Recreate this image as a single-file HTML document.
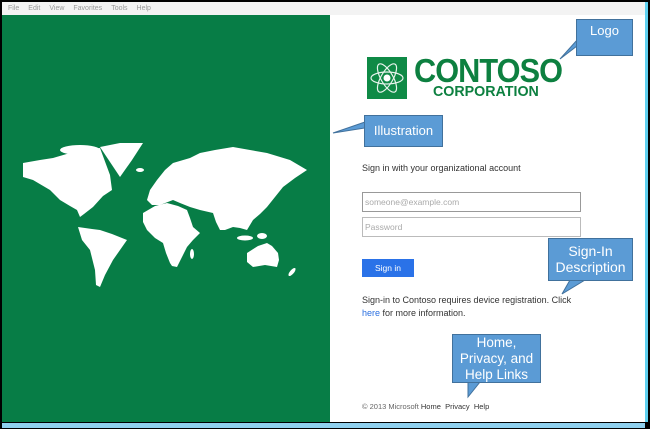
<!DOCTYPE html>
<html><head><style>
body{margin:0;width:650px;height:429px;background:#000;position:relative;overflow:hidden;font-family:"Liberation Sans",sans-serif}
.a{position:absolute}
.menu{left:2px;top:2px;width:643px;height:13px;background:#f3f3f3;font-size:7px;color:#999;line-height:13px}
.menu span{margin-left:6px;margin-right:3px}
.green{left:2px;top:15px;width:328px;height:407px;background:#077d46}
.white{left:330px;top:15px;width:315px;height:407px;background:#fff}
.cy{left:645px;top:2px;width:3px;height:420px;background:#5fd0ef}
.task{left:2px;top:423px;width:643px;height:5px;background:#8fd0ee}
.co{background:#5b9bd5;border:1px solid #41719c;color:#fff;font-family:"Liberation Sans",sans-serif;text-align:center;font-size:13px;line-height:16px;box-sizing:border-box}
.t{font-size:9px;color:#333}
input{position:absolute;border:1px solid #bbb;font-size:8.5px;color:#aaa;padding:0 2px;box-sizing:border-box;font-family:"Liberation Sans",sans-serif}
</style></head><body>
<div class="a menu"><span>File</span><span>Edit</span><span>View</span><span>Favorites</span><span>Tools</span><span>Help</span></div>
<div class="a green"></div>
<div class="a white"></div>
<div class="a cy"></div>
<div class="a task"></div>
<svg class="a" style="left:0;top:0" width="650" height="429">
<g fill="#fff">
<polygon points="23,163 40,160 53,158 70,153 100,148 110,175 112,190 103,196 93,207 84,214 80,217 77,210 70,206 60,200 50,190 33,180 23,177"/>
<polygon points="100,147 120,143 143,143 132,160 120,177 112,165"/>
<polygon points="78,227 92,229 100,230 112,234 127,240 120,250 113,260 105,275 100,287 96,285 95,270 90,250 82,240"/>
<polygon points="147,200 150,190 157,180 165,170 173,163 190,158 200,153 215,150 233,147 250,150 267,153 290,160 307,170 295,178 283,187 275,197 267,207 260,214 253,220 247,230 240,228 233,227 225,230 220,230 216,222 213,213 200,210 190,207 180,203 173,200 160,205 152,205"/>
<polygon points="143,213 155,206 167,203 178,206 187,210 190,218 193,227 200,233 193,240 187,247 182,257 177,267 172,266 170,263 166,253 163,243 155,238 147,230 143,222"/>
<polygon points="247,253 258,246 267,243 272,246 278,253 279,260 277,267 265,265 253,267 247,262"/>
<ellipse cx="245" cy="238" rx="8" ry="2.5"/><ellipse cx="262" cy="236" rx="5" ry="3"/><ellipse cx="192" cy="254" rx="2" ry="5"/><ellipse cx="292" cy="272" rx="2" ry="5" transform="rotate(40 292 272)"/>
<ellipse cx="80" cy="150" rx="20" ry="5"/><ellipse cx="140" cy="170" rx="4" ry="2"/>
</g>
<g fill="#5b9bd5" stroke="#41719c" stroke-width="1">
<polygon points="560,59 577,46 577,40"/>
<polygon points="333,133 365,128 365,122"/>
<polygon points="562,294 570,280 585,280"/>
<polygon points="468,397 468,382 480,382"/>
</g>
</svg>
<div class="a co" style="left:576px;top:19px;width:57px;height:37px;padding-top:3px">Logo</div>
<div class="a co" style="left:364px;top:115px;width:79px;height:32px;line-height:30px">Illustration</div>
<div class="a co" style="left:548px;top:238px;width:85px;height:43px;padding-top:4px;font-size:14px">Sign-In<br>Description</div>
<div class="a co" style="left:452px;top:334px;width:89px;height:49px;padding-top:0px;font-size:13.5px">Home,<br>Privacy, and<br>Help Links</div>
<svg class="a" style="left:367px;top:57px" width="40" height="42"><rect width="40" height="42" fill="#0f8a46"/><g fill="none" stroke="#fff" stroke-width="1.2" opacity=".9"><ellipse cx="20" cy="21" rx="16" ry="6"/><ellipse cx="20" cy="21" rx="16" ry="6" transform="rotate(60 20 21)"/><ellipse cx="20" cy="21" rx="16" ry="6" transform="rotate(-60 20 21)"/></g><circle cx="20" cy="21" r="3.5" fill="#fff"/></svg>
<div class="a" style="left:414px;top:53px;font-size:33px;font-weight:bold;color:#0d8040;letter-spacing:-1px;line-height:36px;transform:scaleX(0.93);transform-origin:left">CONTOSO</div>
<div class="a" style="left:433px;top:84px;font-size:15px;font-weight:bold;color:#0d8040;line-height:16px;transform:scaleX(0.95);transform-origin:left">CORPORATION</div>
<div class="a t" style="left:362px;top:163px">Sign in with your organizational account</div>
<input style="left:362px;top:192px;width:219px;height:20px;border-color:#999" value="someone@example.com">
<input style="left:362px;top:217px;width:219px;height:20px" value="Password">
<div class="a" style="left:362px;top:259px;width:52px;height:18px;background:#2a72e8;color:#fff;font-size:8.5px;line-height:18px;text-align:center">Sign in</div>
<div class="a t" style="left:362px;top:294px;line-height:13px">Sign-in to Contoso requires device registration. Click<br><span style="color:#2a6fe0">here</span> for more information.</div>
<div class="a" style="left:362px;top:402px;font-size:7.5px;color:#666">© 2013 Microsoft <span style="color:#333">Home&nbsp; Privacy&nbsp; Help</span></div>
</body></html>
